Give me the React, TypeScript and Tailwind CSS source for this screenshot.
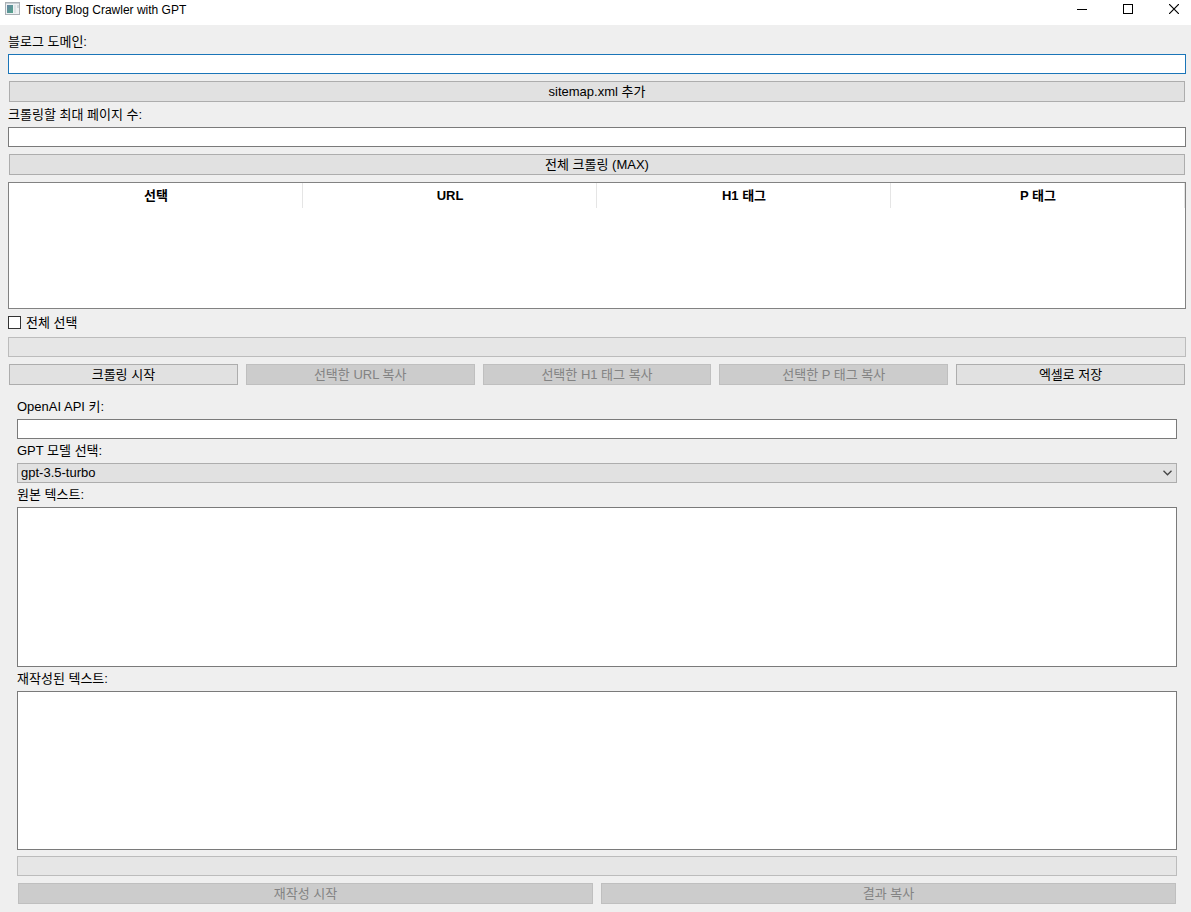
import React, { useState } from 'react';
import { clsx } from 'clsx';

const COLUMNS = ['선택', 'URL', 'H1 태그', 'P 태그'];

const ACTIONS = [
    { label: '크롤링 시작', disabled: false },
    { label: '선택한 URL 복사', disabled: true },
    { label: '선택한 H1 태그 복사', disabled: true },
    { label: '선택한 P 태그 복사', disabled: true },
    { label: '엑셀로 저장', disabled: false },
];

const MODELS = ['gpt-3.5-turbo', 'gpt-4', 'gpt-4-turbo'];

interface ButtonProps {
    children: React.ReactNode;
    disabled?: boolean;
}

function Button({ children, disabled }: ButtonProps) {
    return (
        <button
            type="button"
            disabled={disabled}
            className={clsx(
                'h-[21px] min-w-0 flex-1 border text-center leading-4 whitespace-nowrap',
                disabled
                    ? 'border-[#bfbfbf] bg-[#cccccc] text-[#838383]'
                    : 'border-[#adadad] bg-[#e1e1e1] hover:border-[#0078d7] hover:bg-[#e5f1fb]'
            )}
        >
            {children}
        </button>
    );
}

function ProgressBar({ label }: { label: string }) {
    return (
        <div
            role="progressbar"
            aria-label={label}
            aria-valuenow={0}
            className="h-5 shrink-0 border border-[#bcbcbc] bg-[#e6e6e6]"
        />
    );
}

function TitleBar() {
    return (
        <header className="flex h-[25px] shrink-0 items-start bg-white pl-[5px]">
            <svg width="15" height="13" viewBox="0 0 15 13" className="mt-[2px] shrink-0">
                <defs>
                    <linearGradient id="pane" x1="0" y1="0" x2="1" y2="1">
                        <stop offset="0" stopColor="#6485a3" />
                        <stop offset="1" stopColor="#55a58b" />
                    </linearGradient>
                </defs>
                <rect x="0.5" y="0.5" width="14" height="12" fill="#eef1f3" stroke="#a9b0b5" />
                <rect x="1" y="1" width="13" height="1" fill="#c9d0d5" />
                <rect x="2" y="3" width="6" height="8" fill="url(#pane)" />
                <rect x="9" y="3" width="2" height="8" fill="#dde3e6" />
                <rect x="12" y="3" width="2" height="3" fill="#cfd6da" />
            </svg>
            <h1 className="ml-[6px] text-[12px] leading-5 whitespace-nowrap">
                Tistory Blog Crawler with GPT
            </h1>
            <div className="ml-auto flex gap-3">
                <button type="button" aria-label="최소화" className="flex h-[18px] w-[34px] items-center justify-center">
                    <svg width="10" height="10" viewBox="0 0 10 10" shapeRendering="crispEdges">
                        <path d="M0 5.5H10" stroke="#000" />
                    </svg>
                </button>
                <button type="button" aria-label="최대화" className="flex h-[18px] w-[34px] items-center justify-center">
                    <svg width="10" height="10" viewBox="0 0 10 10" shapeRendering="crispEdges">
                        <rect x="0.5" y="0.5" width="9" height="9" fill="none" stroke="#000" />
                    </svg>
                </button>
                <button type="button" aria-label="닫기" className="flex h-[18px] w-[34px] items-center justify-center">
                    <svg width="10" height="10" viewBox="0 0 10 10">
                        <path d="M0 0L10 10M10 0L0 10" stroke="#000" strokeWidth="1.2" />
                    </svg>
                </button>
            </div>
        </header>
    );
}

export default function App() {
    const [model, setModel] = useState(MODELS[0]);

    return (
        <div className="flex min-h-screen flex-col bg-[#efefef] font-['Liberation_Sans','Noto_Sans_CJK_KR',sans-serif] text-[13px] text-black">
            <TitleBar />

            <main className="flex flex-1 flex-col gap-[7px] pt-[11px] pr-[5px] pb-2 pl-2">
                {/* Crawling options */}
                <label htmlFor="domain" className="h-[11px] leading-[11px]">블로그 도메인:</label>
                <input
                    id="domain"
                    type="text"
                    className="h-5 border border-[#1a75b8] bg-white px-1 outline-none"
                />
                <div className="flex px-px">
                    <Button>sitemap.xml 추가</Button>
                </div>
                <label htmlFor="max-pages" className="h-[11px] leading-[11px]">크롤링할 최대 페이지 수:</label>
                <input
                    id="max-pages"
                    type="text"
                    className="h-5 border border-[#7a7a7a] bg-white px-1 outline-none focus:border-[#0078d7]"
                />
                <div className="flex px-px">
                    <Button>전체 크롤링 (MAX)</Button>
                </div>

                {/* Results */}
                <div className="h-[127px] shrink-0 overflow-auto border border-[#828282] bg-white">
                    <table className="w-full table-fixed border-collapse">
                        <thead>
                            <tr>
                                {COLUMNS.map((column) => (
                                    <th
                                        key={column}
                                        scope="col"
                                        className="h-[25px] bg-[linear-gradient(#e5e5e5,#e5e5e5)] bg-[length:1px_100%] bg-right bg-no-repeat p-0 text-center leading-4 font-bold"
                                    >
                                        {column}
                                    </th>
                                ))}
                            </tr>
                        </thead>
                        <tbody />
                    </table>
                </div>
                <label className="flex h-[14px] items-start gap-[5px] self-start leading-[13px]">
                    <input
                        type="checkbox"
                        className="size-[13px] appearance-none border border-[#333333] bg-white checked:bg-[#0078d7]"
                    />
                    전체 선택
                </label>
                <ProgressBar label="크롤링 진행률" />
                <div className="flex gap-2 px-px">
                    {ACTIONS.map((action) => (
                        <Button key={action.label} disabled={action.disabled}>
                            {action.label}
                        </Button>
                    ))}
                </div>

                {/* GPT rewriting */}
                <section className="flex flex-1 flex-col gap-[6px] px-[9px] pt-[9px]">
                    <label htmlFor="api-key" className="h-3 leading-[11px]">OpenAI API 키:</label>
                    <input
                        id="api-key"
                        type="text"
                        className="h-5 border border-[#7a7a7a] bg-white px-1 outline-none focus:border-[#0078d7]"
                    />
                    <label htmlFor="model" className="h-3 leading-[11px]">GPT 모델 선택:</label>
                    <div className="grid h-5 items-center">
                        <select
                            id="model"
                            value={model}
                            onChange={(e) => setModel(e.target.value)}
                            className="col-start-1 row-start-1 h-5 w-full appearance-none border border-[#adadad] bg-[#e1e1e1] px-[3px] leading-4 outline-none"
                        >
                            {MODELS.map((name) => (
                                <option key={name}>{name}</option>
                            ))}
                        </select>
                        <svg
                            width="9"
                            height="6"
                            viewBox="0 0 9 6"
                            className="pointer-events-none col-start-1 row-start-1 mr-[5px] justify-self-end"
                        >
                            <path d="M0.5 0.8L4.5 4.8L8.5 0.8" fill="none" stroke="#444" strokeWidth="1.3" />
                        </svg>
                    </div>
                    <label htmlFor="source" className="h-3 leading-[11px]">원본 텍스트:</label>
                    <textarea
                        id="source"
                        className="min-h-24 flex-1 resize-none border border-[#7a7a7a] bg-white p-1 outline-none focus:border-[#0078d7]"
                    />
                    <label htmlFor="rewritten" className="h-3 leading-[11px]">재작성된 텍스트:</label>
                    <textarea
                        id="rewritten"
                        className="min-h-24 flex-1 resize-none border border-[#7a7a7a] bg-white p-1 outline-none focus:border-[#0078d7]"
                    />
                    <ProgressBar label="재작성 진행률" />
                    <div className="flex gap-2 px-px pt-px">
                        <Button disabled>재작성 시작</Button>
                        <Button disabled>결과 복사</Button>
                    </div>
                </section>
            </main>
        </div>
    );
}
